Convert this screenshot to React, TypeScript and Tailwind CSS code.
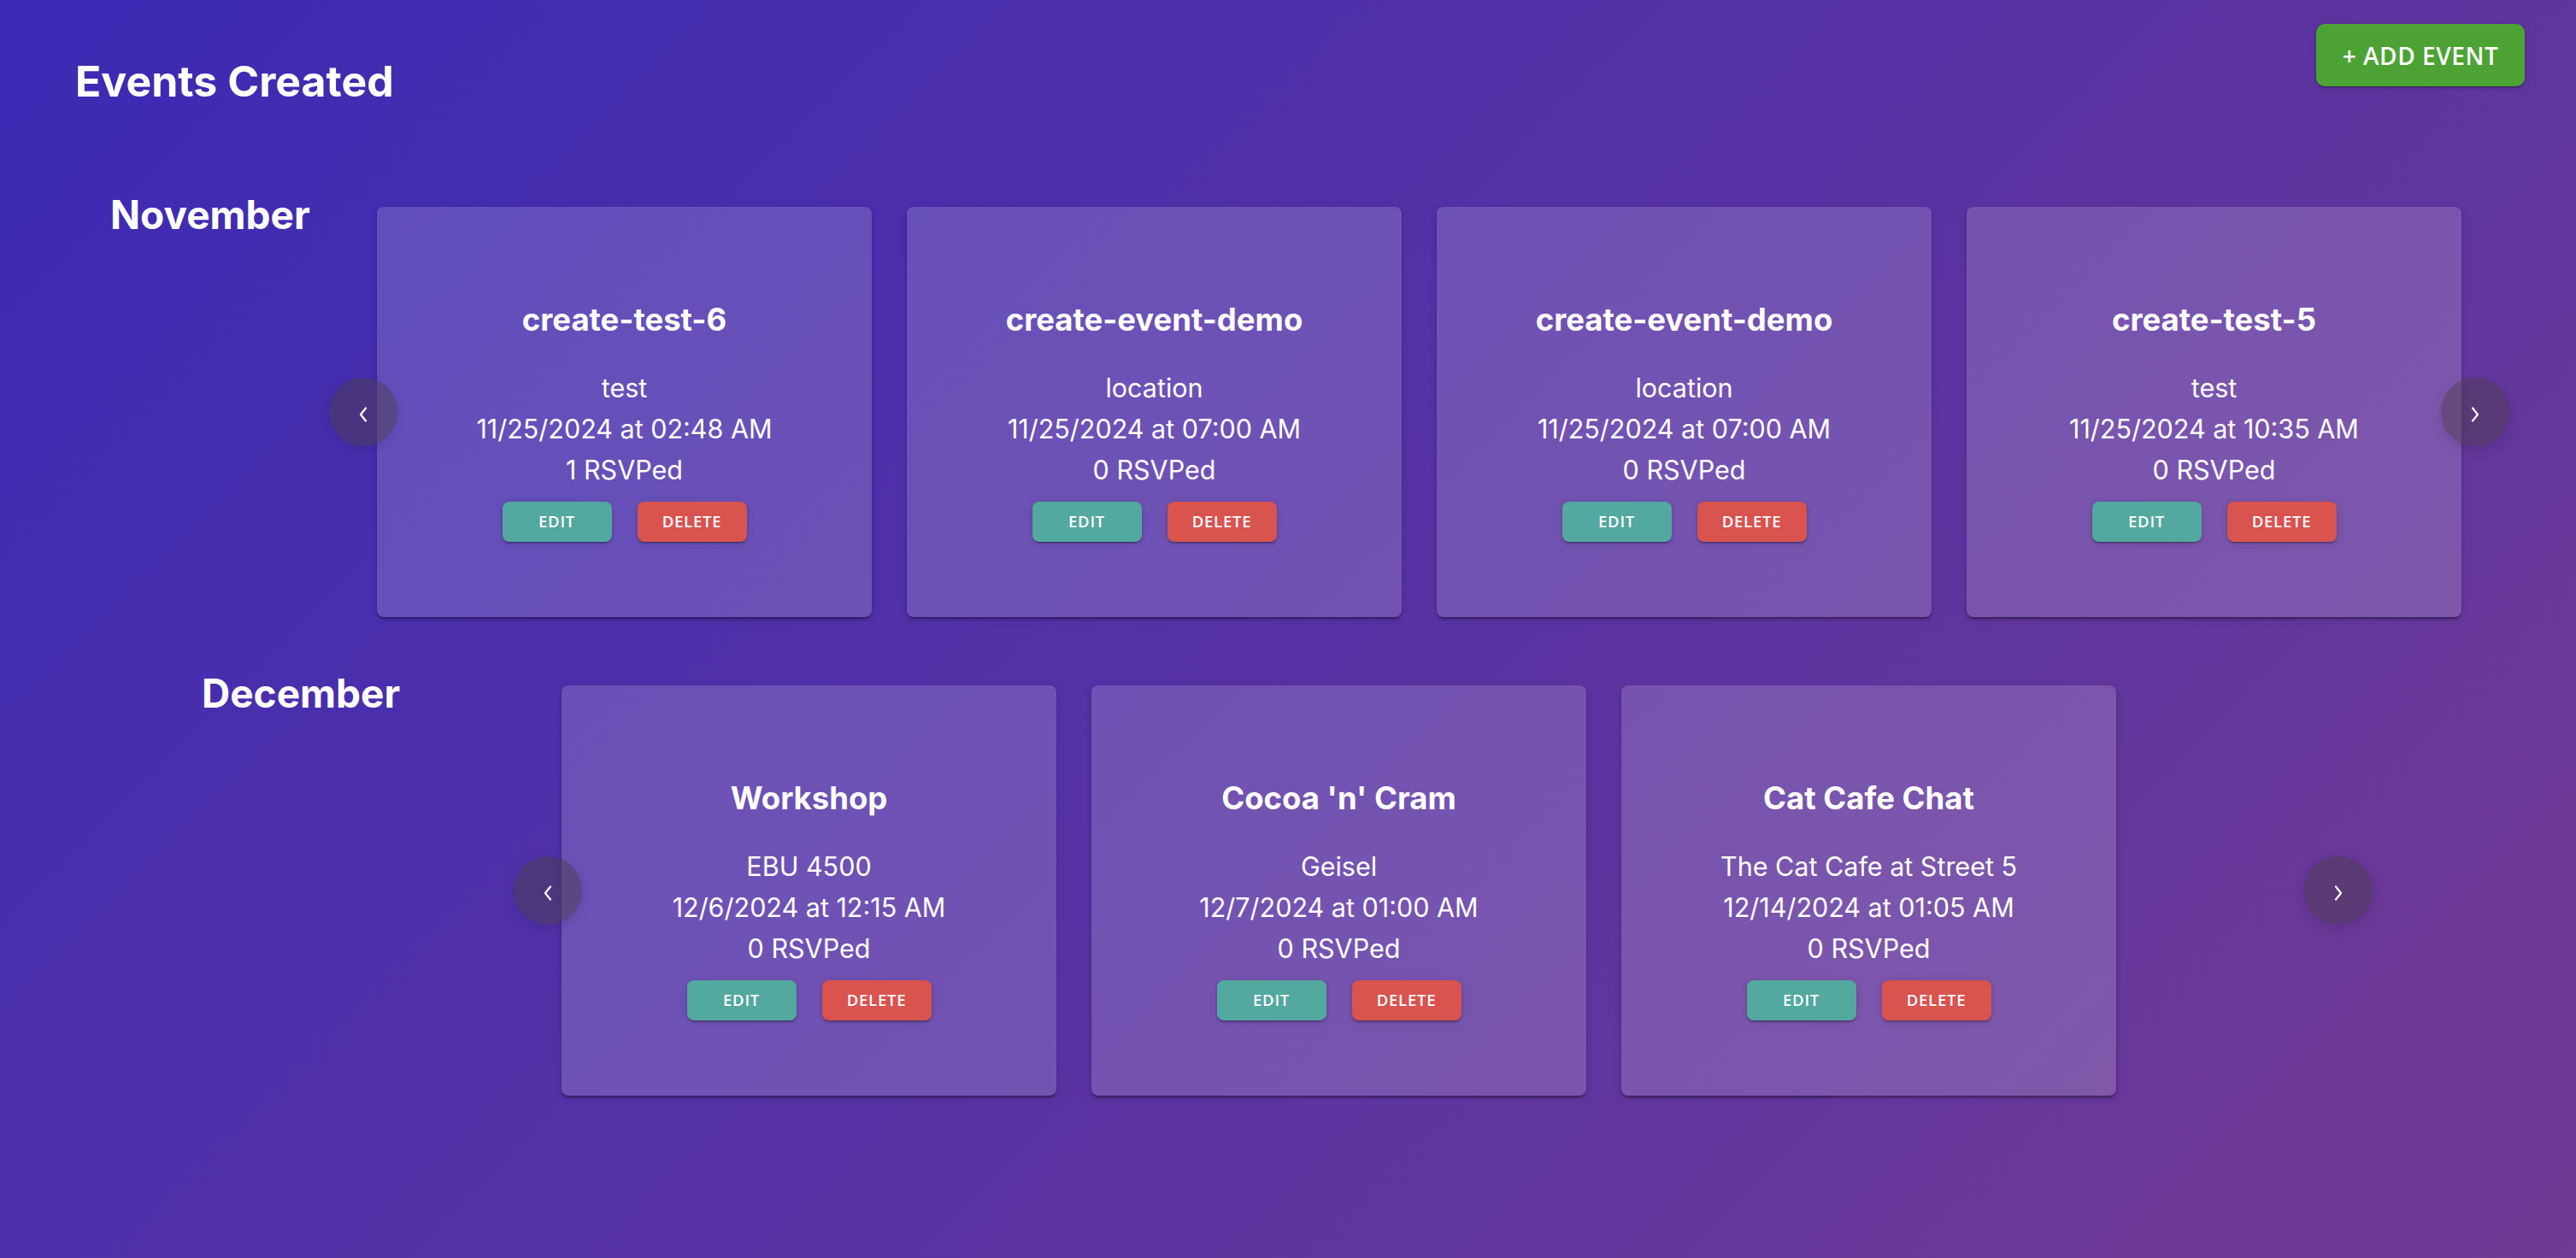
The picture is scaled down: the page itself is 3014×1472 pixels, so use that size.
import React from "react";

type EventItem = {
  name: string;
  location: string;
  when: string;
  rsvps: number;
};

const november: EventItem[] = [
  { name: "create-test-6", location: "test", when: "11/25/2024 at 02:48 AM", rsvps: 1 },
  { name: "create-event-demo", location: "location", when: "11/25/2024 at 07:00 AM", rsvps: 0 },
  { name: "create-event-demo", location: "location", when: "11/25/2024 at 07:00 AM", rsvps: 0 },
  { name: "create-test-5", location: "test", when: "11/25/2024 at 10:35 AM", rsvps: 0 },
];

const december: EventItem[] = [
  { name: "Workshop", location: "EBU 4500", when: "12/6/2024 at 12:15 AM", rsvps: 0 },
  { name: "Cocoa 'n' Cram", location: "Geisel", when: "12/7/2024 at 01:00 AM", rsvps: 0 },
  { name: "Cat Cafe Chat", location: "The Cat Cafe at Street 5", when: "12/14/2024 at 01:05 AM", rsvps: 0 },
];

const btnShadow =
  "shadow-[0_3px_2px_-2px_rgba(0,0,0,0.25),0_2px_3px_0_rgba(0,0,0,0.16),0_1px_8px_0_rgba(0,0,0,0.12)]";

function Chevron({ dir }: { dir: "left" | "right" }) {
  return (
    <svg width="10" height="18" viewBox="0 0 10 18" fill="none" className="mt-[5px]">
      <polyline
        points={dir === "left" ? "8,1.5 2,9 8,16.5" : "2,1.5 8,9 2,16.5"}
        stroke="white"
        strokeWidth="2.2"
        strokeLinecap="round"
        strokeLinejoin="round"
      />
    </svg>
  );
}

function ArrowButton({ dir }: { dir: "left" | "right" }) {
  return (
    <button
      className={`absolute top-1/2 flex h-[80px] w-[80px] -translate-y-1/2 items-center justify-center rounded-full bg-[rgba(75,62,80,0.5)] shadow-[0_4px_14px_rgba(0,0,0,0.12)] ${
        dir === "left" ? "left-0" : "right-0"
      }`}
    >
      <Chevron dir={dir} />
    </button>
  );
}

function EventCard({ ev }: { ev: EventItem }) {
  return (
    <div className="flex h-[480px] w-[579px] shrink-0 flex-col items-center rounded-[8px] bg-white/[0.16] pt-[114px] text-white shadow-[0_4px_3px_-2px_rgba(0,0,0,0.25),0_2px_3px_0_rgba(0,0,0,0.16),0_2px_8px_0_rgba(0,0,0,0.12)]">
      <h3 className="text-[36.5px] font-bold leading-none">{ev.name}</h3>
      <div className="mt-[37px] flex flex-col items-center text-[30.5px] leading-[48px]">
        <p>{ev.location}</p>
        <p>{ev.when}</p>
        <p>{ev.rsvps} RSVPed</p>
      </div>
      <div className="mt-[13px] flex gap-[30px] font-['Open_Sans',sans-serif] text-[18.5px] font-semibold tracking-[0.04em]">
        <button className={`h-[47px] w-[128px] rounded-[8px] bg-[#53a89f] ${btnShadow}`}>EDIT</button>
        <button className={`h-[47px] w-[128px] rounded-[8px] bg-[#d9534f] ${btnShadow}`}>DELETE</button>
      </div>
    </div>
  );
}

function MonthRow({
  label,
  events,
  rowClass,
  labelClass,
  carouselClass,
}: {
  label: string;
  events: EventItem[];
  rowClass: string;
  labelClass: string;
  carouselClass: string;
}) {
  return (
    <section className={`flex items-start ${rowClass}`}>
      <h2 className={`shrink-0 text-[46px] font-bold leading-none text-white ${labelClass}`}>{label}</h2>
      <div className={`relative mt-[14px] shrink-0 pl-[56px] ${carouselClass}`}>
        <div className="flex gap-[41px]">
          {events.map((ev, i) => (
            <EventCard key={i} ev={ev} />
          ))}
        </div>
        <ArrowButton dir="left" />
        <ArrowButton dir="right" />
      </div>
    </section>
  );
}

export default function App() {
  return (
    <main className="min-h-screen w-full overflow-hidden bg-[linear-gradient(135deg,#3b2ab5,#713a94)] font-['Inter',sans-serif]">
      <header className="flex items-start justify-between pl-[88px] pr-[60px] pt-[28px]">
        <h1 className="mt-[42px] text-[50px] font-bold leading-none text-white">Events Created</h1>
        <button
          className={`h-[73px] w-[244px] rounded-[10px] bg-[#4ca334] font-['Open_Sans',sans-serif] text-[28px] font-semibold tracking-[0.02em] text-white ${btnShadow}`}
        >
          + ADD EVENT
        </button>
      </header>

      <div className="mt-[108px] flex flex-col gap-[66px] pb-[120px]">
        <MonthRow
          label="November"
          events={november}
          rowClass="pl-[129px]"
          labelClass="w-[256px]"
          carouselClass="w-[2551px]"
        />
        <MonthRow
          label="December"
          events={december}
          rowClass="pl-[236px]"
          labelClass="w-[365px]"
          carouselClass="w-[2175px]"
        />
      </div>
    </main>
  );
}
